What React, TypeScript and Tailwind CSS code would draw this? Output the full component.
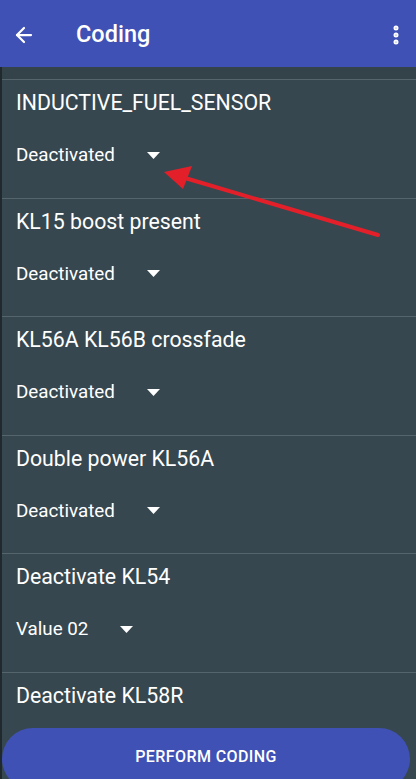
import { ArrowLeft, EllipsisVertical } from "lucide-react";

const rows = [
  { name: "INDUCTIVE_FUEL_SENSOR", value: "Deactivated" },
  { name: "KL15 boost present", value: "Deactivated" },
  { name: "KL56A KL56B crossfade", value: "Deactivated" },
  { name: "Double power KL56A", value: "Deactivated" },
  { name: "Deactivate KL54", value: "Value 02" },
  { name: "Deactivate KL58R", value: "Deactivated" },
];

function Caret() {
  return (
    <svg width="13" height="7" viewBox="0 0 13 7" className="ml-[32px]">
      <path d="M0 0h13L6.5 7z" fill="#fff" />
    </svg>
  );
}

function CodingRow({ name, value }: { name: string; value: string }) {
  return (
    <div className="h-[118.6px] shrink-0 border-t border-[#56656c] pl-[14px]">
      <div className="pt-[9px] h-[37px] text-[21.3px] leading-[28px] text-white">{name}</div>
      <div className="mt-[26px] flex items-center h-[24px] text-[18.8px] leading-[24px] text-white">
        <span>{value}</span>
        <Caret />
      </div>
    </div>
  );
}

export default function App() {
  return (
    <div
      className="relative w-[416px] h-[779px] overflow-hidden bg-[#37474f]"
      style={{ fontFamily: "Roboto, 'Liberation Sans', sans-serif" }}
    >
      <div className="h-[67px] bg-[#3f51b5] flex items-center px-3 pt-[3px] text-white">
        <ArrowLeft size={24} strokeWidth={2.25} />
        <div className="ml-[40px] text-[23.5px] font-medium">Coding</div>
        <div className="flex-1" />
        <EllipsisVertical size={24} strokeWidth={3} className="-mr-1" />
      </div>
      <div className="flex flex-col border-l-2 border-[#20292e]">
        <div className="h-[12px] shrink-0 bg-[#344249]" />
        {rows.map((r) => (
          <CodingRow key={r.name} name={r.name} value={r.value} />
        ))}
      </div>

      <svg className="absolute left-0 top-0 pointer-events-none" width="416" height="779">
        <line x1="378" y1="235" x2="185" y2="178" stroke="#e3202a" strokeWidth="4" strokeLinecap="round" />
        <path d="M164 172 L192 166 L183 189 Z" fill="#e3202a" />
      </svg>

      <button className="absolute left-[2px] top-[728px] w-[408px] h-[62px] rounded-full bg-[#3f51b5] text-white text-[16px] font-medium tracking-wide pb-[4px]">
        PERFORM CODING
      </button>
    </div>
  );
}
